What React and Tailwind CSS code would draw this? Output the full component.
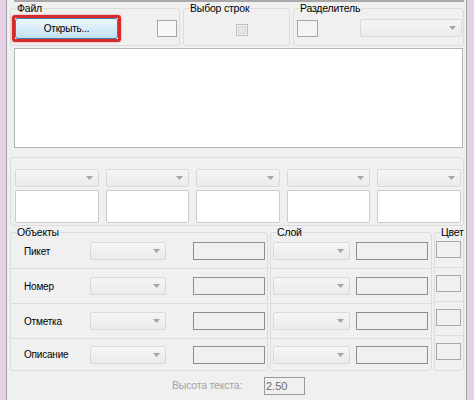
import React from 'react';

// Disabled WinForms-style combo box with a small grey arrow
function Combo({ className }) {
  return (
    <div className={`flex items-center justify-end rounded-[2px] border border-[#d9d9d9] bg-linear-to-b from-[#f5f5f5] to-[#ebebeb] pr-[5px] ${className}`}>
      <svg width="7" height="4" viewBox="0 0 7 4">
        <path d="M0 0h7L3.5 4z" fill="#a6a6a6" />
      </svg>
    </div>
  );
}

// Group box with the caption sitting on the top border
function GroupBox({ label, className, boxClass, children }) {
  return (
    <div className={`relative pt-[6px] ${className}`}>
      <div className={`h-full rounded-[3px] border border-[#dcdcdc] ${boxClass}`}>{children}</div>
      {label && (
        <span className="absolute left-[6px] top-0 bg-[#f0f0f0] px-[1px] text-[10.5px] leading-[12px] tracking-[-0.2px] text-black">
          {label}
        </span>
      )}
    </div>
  );
}

const objectRows = ['Пикет', 'Номер', 'Отметка', 'Описание'];
const rowHeights = ['h-[35px]', 'h-[35px]', 'h-[35px]', 'h-[31px]'];

export default function App() {
  return (
    <div className="flex h-[400px] w-[474px] overflow-hidden bg-[#e6d1e6] pl-[6px] pr-[7px] font-['Liberation_Sans',Arial,sans-serif]">
      <div className="flex-1 border-x border-[#a3a3a3] bg-[#f0f0f0]">
        {/* top edge of the panel above */}
        <div className="ml-[7px] mr-[2px] h-[2px] bg-[#a8a8a8]" />

        {/* Файл / Выбор строк / Разделитель */}
        <div className="flex h-[44px] gap-[3px] pl-[3px]">
          <GroupBox label="Файл" className="w-[170px]" boxClass="flex items-start">
            <div className="ml-[1px] mt-[6px] rounded-[3px] border-[3px] border-[#d52b2b] shadow-[0_0_2px_#e07070]">
              <button className="flex h-[21px] w-[103px] items-center justify-center rounded-[3px] border border-[#3c7fb1] bg-linear-to-b from-[#edf7fd] to-[#c2e0f3] text-[10px] tracking-[-0.2px] text-black">
                Открыть...
              </button>
            </div>
            <div className="ml-[36px] mt-[11px] h-[17px] w-[20px] border border-[#a5a5a5] bg-[#f8f8f8]" />
          </GroupBox>

          <GroupBox label="Выбор строк" className="w-[107px]" boxClass="flex items-start">
            <div className="ml-[52px] mt-[15px] flex h-[12px] w-[12px] items-center justify-center border border-[#bdbdbd] bg-[#f4f4f4]">
              <div className="h-[8px] w-[8px] border border-[#d6d6d6] bg-[#e6e6e6]" />
            </div>
          </GroupBox>

          <GroupBox label="Разделитель" className="w-[171px]" boxClass="flex items-start">
            <div className="ml-[3px] mt-[11px] h-[17px] w-[21px] border border-[#a5a5a5] bg-[#f4f4f4]" />
            <Combo className="ml-[42px] mt-[10px] h-[18px] w-[102px]" />
          </GroupBox>
        </div>

        {/* list */}
        <div className="ml-[7px] mt-[2px] h-[100px] w-[449px] border border-[#b5b5b5] bg-white" />

        {/* column mapping */}
        <div className="ml-[3px] mt-[9px] h-[69px] w-[454px] rounded-[3px] border border-[#dcdcdc] pl-[4px] pt-[11px]">
          <div className="grid w-[446px] grid-cols-5 gap-x-[7px] gap-y-[3px]">
            {[0, 1, 2, 3, 4].map((i) => (
              <Combo key={`c${i}`} className="h-[18px]" />
            ))}
            {[0, 1, 2, 3, 4].map((i) => (
              <div key={`t${i}`} className="h-[33px] rounded-[2px] border border-[#cbcbcb] bg-white" />
            ))}
          </div>
        </div>

        {/* Объекты / Слой / Цвет */}
        <div className="flex gap-[2px] pl-[3px]">
          <GroupBox label="Объекты" className="w-[258px]" boxClass="pt-[1px]">
            {objectRows.map((name, i) => (
              <div key={name} className={`flex items-center ${rowHeights[i]} ${i < 3 ? 'border-b border-[#dcdcdc]' : ''}`}>
                <span className="w-[79px] pl-[13px] text-[10px] tracking-[-0.2px] text-black">{name}</span>
                <Combo className="h-[18px] w-[76px]" />
                <div className="ml-[27px] h-[18px] w-[72px] border border-[#8f8f8f] bg-[#f0f0f0]" />
              </div>
            ))}
          </GroupBox>

          <GroupBox label="Слой" className="w-[162px]" boxClass="pt-[1px]">
            {objectRows.map((name, i) => (
              <div key={name} className={`flex items-center ${rowHeights[i]} ${i < 3 ? 'border-b border-[#dcdcdc]' : ''}`}>
                <Combo className="ml-[2px] h-[18px] w-[77px]" />
                <div className="ml-[6px] h-[18px] w-[72px] border border-[#8f8f8f] bg-[#f0f0f0]" />
              </div>
            ))}
          </GroupBox>

          <GroupBox label="Цвет" className="w-[30px]" boxClass="pt-[1px]">
            {objectRows.map((name, i) => (
              <div key={name} className={`h-[34px] pt-[7px] ${i < 3 ? 'border-b border-[#dcdcdc]' : ''}`}>
                <div className="ml-[1px] h-[17px] w-[25px] border border-[#a8a8a8] bg-[#f0f0f0]" />
              </div>
            ))}
          </GroupBox>
        </div>

        {/* text height */}
        <div className="ml-[165px] mt-[6px] flex h-[18px] items-center">
          <span className="w-[92px] text-[10.5px] tracking-[-0.2px] text-[#a3a3a3]">Высота текста:</span>
          <div className="flex h-[18px] w-[41px] items-center border border-[#9a9a9a] bg-[#f0f0f0] pl-[1px] text-[11px] text-[#6d6d6d]">
            2.50
          </div>
        </div>
      </div>
    </div>
  );
}
